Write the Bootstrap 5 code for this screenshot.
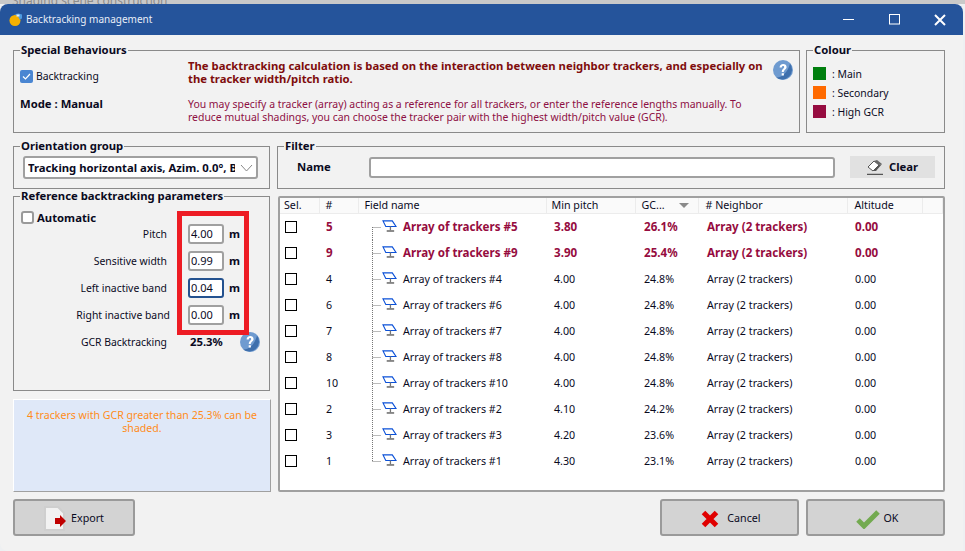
<!DOCTYPE html>
<html lang="en">
<head>
<meta charset="utf-8">
<title>Backtracking management</title>
<link href="https://cdn.jsdelivr.net/npm/bootstrap@5.3.0/dist/css/bootstrap.min.css" rel="stylesheet">
<style>
html,body{height:100%}
body{background:#eef0f2;font-family:"Noto Sans","Liberation Sans",sans-serif;font-size:10.4px;line-height:13px;color:#0a0a1e;overflow:hidden;width:965px;height:551px}
.behind{height:4px;background:#c9c9c9;overflow:hidden;color:#8c8c8c;padding-left:12px;width:965px}
.behind span{display:block;margin-top:-4px;line-height:10px;font-size:12px}
.dlg{width:963px;height:547px;background:#f2f2f2;border-radius:8px 8px 0 8px;overflow:hidden}
.dlg-title{height:31px;background:#25549b;color:#e9eef7;font-size:10px;padding-left:9px}
.dlg-title .t{margin-left:3px}
.winbtn{width:46px;height:31px}
.dlg-body{padding:8px 0 0 13px;width:945px;height:516px;margin-left:0}
.grp{border:1px solid #8a8a8a;padding:0;margin:0;min-width:0}
.grp>legend{float:none;width:auto;font-size:11.3px;font-weight:700;line-height:14px;margin:0 0 0 6px;padding:0 1px;color:#0a0a1e}
.top-row{height:90px;gap:6px}
.spec{width:787px;height:90px}
.colr{width:139px;height:90px}
.spec-left{width:174px;padding:0 0 0 6px;flex:none}
.spec-left .form-check{margin:12px 0 0;min-height:0;padding:0;height:14px}
.cb-blue{width:13px;height:13px;border-radius:2px;background:#4a86d2;flex:none}
.cb-blue svg{display:block}
.cb-text{padding-top:1px;margin-left:3px}
.mode{font-weight:700;margin-top:14px;font-size:11.3px}
.spec-msg{width:580px;flex:none}
.spec-msg .m1{color:#7f0d0d;font-weight:700;font-size:11.3px;margin:2px 0 13px}
.spec-msg .m2{color:#8e1044;margin:0;font-size:10.45px}
.hlp{flex:none;display:block}
.spec-hlp{margin:3px 0 0 5px}
.swatches{margin-top:8px}
.swatch-row{height:19px;padding-left:6px}
.swatch{width:13px;height:13px;flex:none;margin:-2px 6px 0 0}
.sw-g{background:#007f0e}
.sw-o{background:#ff6a00}
.sw-r{background:#960c40}
.cols{margin-top:6px;gap:6px;height:353px}
.left-col{width:258px;flex:none}
.right-col{width:668px;flex:none;margin-left:0}
.orient{height:50px;width:257px}
.osel{width:235px;height:23px;margin:3px 0 0 9px;border:2px solid #a0a0a0;border-radius:3px;font-family:inherit;font-size:11.3px;font-weight:700;color:#0a0a1e;padding:0 21px 0 3px;line-height:19px;background-color:#fff;background-image:url("data:image/svg+xml,%3Csvg xmlns='http://www.w3.org/2000/svg' width='13' height='8'%3E%3Cpath d='M1 1l5.5 6L12 1' fill='none' stroke='%23888'/%3E%3C/svg%3E");background-position:right 3px center;background-size:13px 8px;box-shadow:none}
.refp{margin-top:0;height:202px;width:257px;position:relative}
.auto{margin:8px 0 0 7px;font-weight:700;font-size:11.3px}
.auto .cb-empty{width:13px;height:13px;border:2px solid #9a9a9a;border-radius:3px;background:#fff;flex:none;margin-right:3px}
.prow{height:27px}
.plabel{width:153px;text-align:right;flex:none;padding-top:1px}
.plabel-x{margin-right:-3px}
.pinp{width:36px;height:20px;margin-left:21px;border:2px solid #a0a0a0;border-radius:3px;font:inherit;font-size:11px;padding:0 1px;color:#0a0a1e;background:#fff;flex:none;box-shadow:none;min-height:0;line-height:16px}
.pinp.foc{border-color:#24528f}
.unit{margin-left:5px;font-weight:700;font-size:11.3px}
.prows{margin-top:-4px}
.gcr-v{margin-left:23px;font-weight:700;font-size:11.3px;width:50px;flex:none}
.redbox{position:absolute;left:163px;top:8px;width:72px;height:124px;border:5px solid #ed1c24;pointer-events:none}
.note{margin-top:8px;height:93px;width:258px;background:#dfe8f8;border:1px solid;border-color:#fff #a0a0a0 #a0a0a0 #fff;color:#ff8c1a;font-size:10.6px;text-align:center;padding:9px 8px 0}
.filt{height:50px;width:668px}
.fname{font-weight:700;margin:-2px 0 0 19px;width:72px;flex:none;font-size:11.3px}
.filt-row{margin-top:3px}
.finp{width:466px;height:21px;border:2px solid #a0a0a0;border-radius:3px;background:#fff;flex:none;box-shadow:none;padding:0;min-height:0}
.clearb{width:85px;height:22px;margin-left:15px;background:#e1e1e1;border:0;border-radius:0;font-weight:700;font-size:11.3px;color:#0a0a1e;padding:0}
.clearb svg{margin-right:5px}
.grid-wrap{margin-top:7px;height:296px;width:667px;margin-left:1px;background:#fff;border:2px solid;border-color:#a0a0a0;border-radius:2px;overflow:hidden}
.tracker-grid{table-layout:fixed;width:663px;font-size:10.7px;line-height:13px;color:#0a0a1e}
.tracker-grid.table>:not(caption)>*>*{padding:0;background:transparent;color:inherit;vertical-align:middle;box-shadow:none}
.tracker-grid thead tr{height:15px}
.tracker-grid.table>thead>tr>th{font-weight:400;background:#fafafa;border-right:1px solid #ececec;border-bottom:1px solid #ececec;padding-top:1px}
.tracker-grid tbody tr{height:26px}
.tracker-grid tbody tr.hot{color:#960c40;font-weight:700;font-size:11.6px}
.c1{width:39px}.c2{width:39px}.c3{width:188px}.c4{width:89px}.c5{width:63px}.c6{width:149px}.c7{width:75px}
.tracker-grid.table>:not(caption)>*>.ph1{padding-left:4px}
.tracker-grid.table>:not(caption)>*>.ph2{padding-left:6px}
.tracker-grid.table>:not(caption)>*>.ph3{padding-left:6px}
.tracker-grid.table>:not(caption)>*>.ph4{padding-left:5px}
.tracker-grid.table>:not(caption)>*>.ph5{padding-left:6px}
.tracker-grid.table>:not(caption)>*>.ph6{padding-left:7px}
.tracker-grid.table>:not(caption)>*>.ph7{padding-left:7px}
.tracker-grid.table>:not(caption)>*>.pd1{padding-left:5px}
.tracker-grid.table>:not(caption)>*>.pd2{padding-left:7px}
.tracker-grid.table>:not(caption)>*>.pd4{padding-left:8px}
.tracker-grid.table>:not(caption)>*>.pd5{padding-left:9px}
.tracker-grid.table>:not(caption)>*>.pd6{padding-left:9px}
.tracker-grid.table>:not(caption)>*>.pd7{padding-left:8px}
.tracker-grid.table>tbody>tr:not(.hot)>.tx{padding-top:2px}
.tick{display:block;width:12px;height:12px;border:1px solid #000;background:#fff}
.tree{display:block;flex:none;margin-left:9px;margin-right:6px}
.nm{display:block}
tr:not(.hot) .nm{padding-top:2px}
.sort-arrow{width:0;height:0;border-left:5px solid transparent;border-right:5px solid transparent;border-top:5px solid #8a8a8a;margin-left:14px}
.foot{margin-top:7px;height:37px;gap:7px;width:932px}
.act{background:#d3d3d3;border:2px solid #9a9a9a;border-radius:3px;height:37px;font-size:10.7px;color:#0a0a1e;padding:2px 0 0}
.act-export{width:122px}
.act-main{width:139px;padding-left:3px}
.spacer{flex:1}
</style>
</head>
<body>
<svg width="0" height="0" class="d-block position-absolute">
<defs>
<symbol id="trk" viewBox="0 0 16 14">
<path d="M1 1h10l4 6H4z" fill="#fff" stroke="#0a50d8" stroke-width="1.2"/>
<path d="M9 7v4" stroke="#777" stroke-width="1.4"/>
<path d="M5 11.8h8" stroke="#666" stroke-width="1.6"/>
</symbol>
<symbol id="help" viewBox="0 0 20 20">
<circle cx="10" cy="10" r="10" fill="#6f9bd0"/>
<path d="M17 3.5A10 10 0 0 1 3 17.5C9 18 15 12 17 3.5z" fill="#3f70ad"/>
<path d="M6.6 7.6c0-2.4 1.6-3.6 3.6-3.6s3.4 1.1 3.4 3c0 2.6-2.8 2.7-2.8 5.1H8.8c0-3.2 2.4-3.4 2.4-5 0-.8-.4-1.2-1.1-1.2-.8 0-1.3.6-1.3 1.7zM8.7 13.2h2.2v2.3H8.7z" fill="#fff"/>
</symbol>
</defs>
</svg>
<div class="behind"><span>Shading scene construction</span></div>
<div class="dlg">
  <div class="dlg-title d-flex align-items-center">
    <svg width="14" height="14" viewBox="0 0 14 14"><circle cx="6" cy="7.5" r="5.5" fill="#f5b000"/><path d="M5 1.2C8 1.5 9.8 3.6 10.4 6.5L13 5.4V1.4L9.5 .6z" fill="#4f9be0"/><path d="M7.5 1.5h3v2h-3z" fill="#dcecf9"/></svg>
    <span class="t">Backtracking management</span>
    <span class="spacer"></span>
    <span class="winbtn d-flex align-items-center justify-content-center"><svg width="11" height="11"><path d="M0 5.5h11" stroke="#fff" stroke-width="1"/></svg></span>
    <span class="winbtn d-flex align-items-center justify-content-center"><svg width="11" height="11"><rect x=".5" y=".5" width="10" height="9.5" fill="none" stroke="#fff"/></svg></span>
    <span class="winbtn d-flex align-items-center justify-content-center"><svg width="12" height="12"><path d="M1 1l10 10M11 1L1 11" stroke="#fff" stroke-width="2"/></svg></span>
  </div>
  <div class="dlg-body">
    <div class="top-row d-flex">
      <fieldset class="grp spec">
        <legend>Special Behaviours</legend>
        <div class="d-flex w-100">
          <div class="spec-left">
            <label class="form-check d-flex align-items-center"><span class="cb-blue"><svg width="13" height="13"><path d="M3 6.5l2.5 2.5 4.5-5" fill="none" stroke="#fff" stroke-width="1.2"/></svg></span><span class="cb-text">Backtracking</span></label>
            <div class="mode">Mode : Manual</div>
          </div>
          <div class="spec-msg">
            <p class="m1">The backtracking calculation is based on the interaction between neighbor trackers, and especially on the tracker width/pitch ratio.</p>
            <p class="m2">You may specify a tracker (array) acting as a reference for all trackers, or enter the reference lengths manually. To reduce mutual shadings, you can choose the tracker pair with the highest width/pitch value (GCR).</p>
          </div>
          <svg class="hlp spec-hlp" width="20" height="20"><use href="#help"/></svg>
        </div>
      </fieldset>
      <fieldset class="grp colr">
        <legend>Colour</legend>
        <div class="swatches">
          <div class="swatch-row d-flex align-items-center"><span class="swatch sw-g"></span>: Main</div>
          <div class="swatch-row d-flex align-items-center"><span class="swatch sw-o"></span>: Secondary</div>
          <div class="swatch-row d-flex align-items-center"><span class="swatch sw-r"></span>: High GCR</div>
        </div>
      </fieldset>
    </div>
    <div class="cols d-flex">
      <div class="left-col d-flex flex-column">
        <fieldset class="grp orient">
          <legend>Orientation group</legend>
          <select class="form-select osel"><option>Tracking horizontal axis, Azim. 0.0°, Backtracking</option></select>
        </fieldset>
        <fieldset class="grp refp">
          <legend>Reference backtracking parameters</legend>
          <div class="auto d-flex align-items-center"><span class="cb-empty"></span>Automatic</div>
          <div class="prows">
            <div class="prow d-flex align-items-center"><span class="plabel">Pitch</span><input class="pinp" value="4.00"><span class="unit">m</span></div>
            <div class="prow d-flex align-items-center"><span class="plabel">Sensitive width</span><input class="pinp" value="0.99"><span class="unit">m</span></div>
            <div class="prow d-flex align-items-center"><span class="plabel">Left inactive band</span><input class="pinp foc" value="0.04"><span class="unit">m</span></div>
            <div class="prow d-flex align-items-center"><span class="plabel"><span class="plabel-x">Right inactive band</span></span><input class="pinp" value="0.00"><span class="unit">m</span></div>
            <div class="prow d-flex align-items-center"><span class="plabel">GCR Backtracking</span><span class="gcr-v">25.3%</span><svg class="hlp" width="20" height="20"><use href="#help"/></svg></div>
          </div>
          <div class="redbox"></div>
        </fieldset>
        <div class="note">4 trackers with GCR greater than 25.3% can be shaded.</div>
      </div>
      <div class="right-col d-flex flex-column">
        <fieldset class="grp filt">
          <legend>Filter</legend>
          <div class="d-flex align-items-center filt-row">
            <span class="fname">Name</span>
            <input class="form-control finp" aria-label="Name">
            <button class="btn clearb d-flex align-items-center justify-content-center" type="button">
              <svg width="17" height="16" viewBox="0 0 17 16"><path d="M1 8l6-6 5 4-6 6z" fill="#fff" stroke="#555"/><path d="M7 2l3-1 5 4-3 1z" fill="#666"/><path d="M12 6l3-1-6 7H6z" fill="#555"/><path d="M0 15.3h16" stroke="#333"/></svg>Clear
            </button>
          </div>
        </fieldset>
        <div class="grid-wrap">
          <table class="table table-borderless mb-0 tracker-grid">
            <thead><tr>
              <th class="c1 ph1">Sel.</th><th class="c2 ph2">#</th><th class="c3 ph3">Field name</th><th class="c4 ph4">Min pitch</th>
              <th class="c5 ph5"><span class="d-flex align-items-center">GC...<span class="sort-arrow"></span></span></th><th class="c6 ph6"># Neighbor</th><th class="c7 ph7">Altitude</th><th></th>
            </tr></thead>
            <tbody id="rows"></tbody>
          </table>
        </div>
      </div>
    </div>
    <div class="foot d-flex">
      <button class="btn act act-export d-flex align-items-center justify-content-center" type="button">
        <svg width="23" height="25" viewBox="0 0 23 25" class="me-1"><path d="M1 1h13l6 6v17H1z" fill="#f2f2f2" stroke="#cfcfcf" stroke-width="2"/><path d="M11 12h5V9l6 6-6 6v-3h-5z" fill="#c00000"/></svg>Export
      </button>
      <span class="spacer"></span>
      <button class="btn act act-main d-flex align-items-center justify-content-center" type="button">
        <svg width="18" height="18" viewBox="0 0 18 18" class="me-2"><path d="M2.5 2.5l13 13M15.5 2.5l-13 13" stroke="#e00000" stroke-width="5"/></svg>Cancel
      </button>
      <button class="btn act act-main d-flex align-items-center justify-content-center" type="button">
        <svg width="24" height="20" viewBox="0 0 24 20" class="me-1"><path d="M2 11l6 6L22 3" fill="none" stroke="#73aa50" stroke-width="5"/></svg>OK
      </button>
    </div>
  </div>
</div>
<script>
var data=[[5,'3.80','26.1%',1],[9,'3.90','25.4%',1],[4,'4.00','24.8%'],[6,'4.00','24.8%'],[7,'4.00','24.8%'],[8,'4.00','24.8%'],[10,'4.00','24.8%'],[2,'4.10','24.2%'],[3,'4.20','23.6%'],[1,'4.30','23.1%']];
var h='';
data.forEach(function(r,i){
 var y1=i==0?13:0,y2=i==data.length-1?13:26;
 h+='<tr'+(r[3]?' class="hot"':'')+'><td class="pd1"><span class="tick"></span></td><td class="pd2 tx">'+r[0]+'</td><td><div class="d-flex align-items-center"><svg class="tree" width="30" height="26"><path d="M5.5 '+y1+'V'+y2+'M5.5 13.5H14" stroke="#777" stroke-dasharray="1 1" fill="none"/><use href="#trk" x="15" y="6" width="15" height="13"/></svg><span class="nm">Array of trackers #'+r[0]+'</span></div></td><td class="pd4 tx">'+r[1]+'</td><td class="pd5 tx">'+r[2]+'</td><td class="pd6 tx">Array (2 trackers)</td><td class="pd7 tx">0.00</td><td></td></tr>';
});
document.getElementById('rows').innerHTML=h;
</script>
<script src="https://cdn.jsdelivr.net/npm/bootstrap@5.3.0/dist/js/bootstrap.bundle.min.js"></script>
</body>
</html>
